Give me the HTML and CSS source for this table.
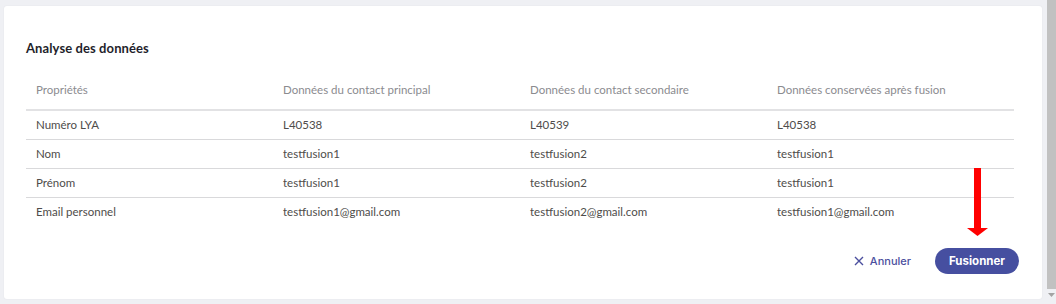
FILE: index.html
```html
<!DOCTYPE html>
<html lang="fr">
<head>
<meta charset="utf-8">
<link rel="stylesheet" href="styles.css">
</head>
<body>
<div class="page">
  <main class="main">
    <section class="card">
      <h2 class="title">Analyse des données</h2>
      <table class="grid">
        <thead>
          <tr>
            <th>Propriétés</th>
            <th>Données du contact principal</th>
            <th>Données du contact secondaire</th>
            <th>Données conservées après fusion</th>
          </tr>
        </thead>
        <tbody>
          <tr><td>Numéro LYA</td><td>L40538</td><td>L40539</td><td>L40538</td></tr>
          <tr><td>Nom</td><td>testfusion1</td><td>testfusion2</td><td>testfusion1</td></tr>
          <tr><td>Prénom</td><td>testfusion1</td><td>testfusion2</td><td>testfusion1</td></tr>
          <tr><td>Email personnel</td><td>testfusion1@gmail.com</td><td>testfusion2@gmail.com</td><td>testfusion1@gmail.com</td></tr>
        </tbody>
      </table>
      <div class="actions">
        <button class="btn-cancel" type="button">
          <svg class="x" viewBox="0 0 10 10" width="10" height="10"><path d="M1 1 L9 9 M9 1 L1 9" stroke="#4b4f9e" stroke-width="1.4" fill="none"/></svg>
          Annuler
        </button>
        <div class="merge-wrap">
          <svg class="arrow" viewBox="0 0 21 68" width="21" height="68"><rect x="7" y="0" width="7" height="61" fill="#ff0000"/><polygon points="0,60 21,60 10.5,68" fill="#ff0000"/></svg>
          <button class="btn-merge" type="button">Fusionner</button>
        </div>
      </div>
    </section>
  </main>
  <div class="scrollbar">
    <div class="thumb"></div>
    <div class="arrow-btn"><svg viewBox="0 0 7 4" width="7" height="4"><polygon points="0,0 7,0 3.5,4" fill="#a3a3a3"/></svg></div>
  </div>
</div>
</body>
</html>
```

FILE: styles.css
```css
* { box-sizing: border-box; }
html, body { margin: 0; padding: 0; }
body {
  background: #eff0f4;
  font-family: "Lato", "Inter", sans-serif;
  width: 1056px;
  height: 304px;
  overflow: hidden;
}
.page {
  display: flex;
  height: 304px;
}
.main {
  flex: 1;
  padding: 6px 5px 5px 4px;
}
.card {
  background: #fff;
  border-radius: 3px;
  height: 293px;
  padding: 34px 27px 0 22px;
  box-shadow: 0 0 2px rgba(0,0,0,0.06);
}
.title {
  margin: 0;
  font-family: "Lato", "Inter", sans-serif;
  font-size: 13px;
  font-weight: 700;
  color: #1f1f2b;
  letter-spacing: 0.1px;
  line-height: 16px;
}
.grid {
  margin-top: 13px;
  width: 988px;
  border-collapse: collapse;
  table-layout: fixed;
  font-size: 11.5px;
}
.grid th {
  text-align: left;
  font-weight: 400;
  color: #8b8b8f;
  height: 41px;
  padding: 0 0 0 10px;
  border-bottom: 2px solid #e2e2e4;
  vertical-align: middle;
}
.grid td {
  color: #4e4c4a;
  height: 29px;
  padding: 0 0 0 10px;
  border-bottom: 1px solid #d9d9db;
  vertical-align: middle;
}
.grid tbody tr:last-child td { border-bottom: none; }
.actions {
  display: flex;
  justify-content: flex-end;
  align-items: flex-end;
  gap: 24px;
  margin-top: -58px;
  margin-right: -4px;
}
.btn-cancel {
  display: flex;
  align-items: center;
  gap: 6px;
  background: none;
  border: none;
  padding: 0;
  height: 26px;
  font-family: "Inter", sans-serif;
  font-size: 11px;
  font-weight: 500;
  color: #4b4f9e;
}
.merge-wrap {
  display: flex;
  flex-direction: column;
  align-items: center;
}
.arrow {
  display: block;
  margin-bottom: 12px;
}
.btn-merge {
  width: 84px;
  height: 26px;
  border: none;
  border-radius: 13px;
  background: #464fa0;
  color: #fff;
  font-family: "Inter", sans-serif;
  font-size: 11.5px;
  font-weight: 700;
  padding: 0;
}
.scrollbar {
  width: 9px;
  display: flex;
  flex-direction: column;
}
.thumb {
  background: #c1c1c1;
  height: 289px;
}
.arrow-btn {
  height: 15px;
  display: flex;
  justify-content: center;
  padding-top: 4px;
}
.arrow-btn svg { display: block; }
```
